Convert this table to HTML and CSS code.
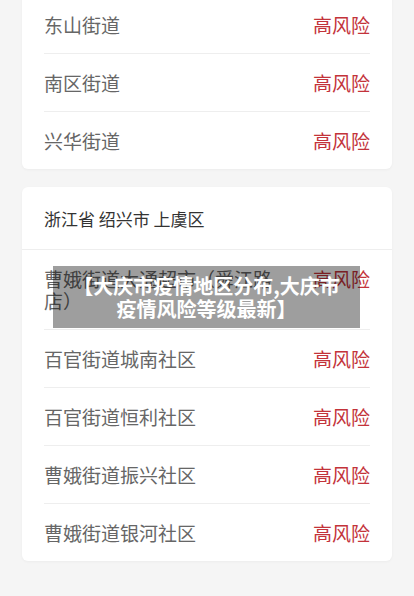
FILE: index.html
```html
<!DOCTYPE html>
<html>
<head>
  <meta charset="utf-8">
  <title>大庆市疫情地区分布</title>
  <link rel="stylesheet" href="styles.css">
</head>
<body>
  <div class="page">
    <div class="card card-first">
      <div class="row"><span class="name">东山街道</span><span class="level">高风险</span></div>
      <div class="row"><span class="name">南区街道</span><span class="level">高风险</span></div>
      <div class="row"><span class="name">兴华街道</span><span class="level">高风险</span></div>
    </div>

    <div class="card">
      <div class="card-head">浙江省 绍兴市 上虞区</div>
      <div class="row"><span class="name">曹娥街道大通超市（舜江路店）</span><span class="level">高风险</span></div>
      <div class="row"><span class="name">百官街道城南社区</span><span class="level">高风险</span></div>
      <div class="row"><span class="name">百官街道恒利社区</span><span class="level">高风险</span></div>
      <div class="row"><span class="name">曹娥街道振兴社区</span><span class="level">高风险</span></div>
      <div class="row"><span class="name">曹娥街道银河社区</span><span class="level">高风险</span></div>
    </div>

    <div class="caption">【大庆市疫情地区分布,大庆市<br>疫情风险等级最新】</div>
  </div>
</body>
</html>
```

FILE: styles.css
```css
body {
  margin: 0;
  background-color: #f5f5f5;
  font-family: "Noto Sans CJK SC", "Noto Sans", sans-serif;
}

.page {
  position: relative;
  padding: 0 22px 40px;
}

.card {
  background-color: #fff;
  border-radius: 6px;
  box-shadow: 0 1px 3px rgba(0, 0, 0, 0.04);
  padding: 0 22px;
  margin-bottom: 18px;
}

.card-first {
  margin-top: -4px;
  border-radius: 0 0 6px 6px;
}

.card-head {
  margin: 0 -22px;
  padding: 0 22px;
  height: 62px;
  display: flex;
  align-items: center;
  font-size: 17px;
  color: #333;
  border-bottom: 1px solid #eee;
}

.row {
  display: flex;
  justify-content: space-between;
  align-items: flex-start;
  gap: 20px;
  padding: 18px 0 17px;
  font-size: 19px;
  line-height: 22px;
  border-bottom: 1px solid #eee;
}

.row:last-child {
  border-bottom: none;
}

.name {
  color: #666;
}

.level {
  color: #c3333a;
  white-space: nowrap;
}

.caption {
  position: absolute;
  top: 270px;
  left: 53px;
  width: 307px;
  box-sizing: border-box;
  padding: 8px 6px;
  background-color: rgba(0, 0, 0, 0.38);
  color: #fff;
  font-size: 20px;
  font-weight: bold;
  line-height: 23px;
  text-align: center;
}
```
